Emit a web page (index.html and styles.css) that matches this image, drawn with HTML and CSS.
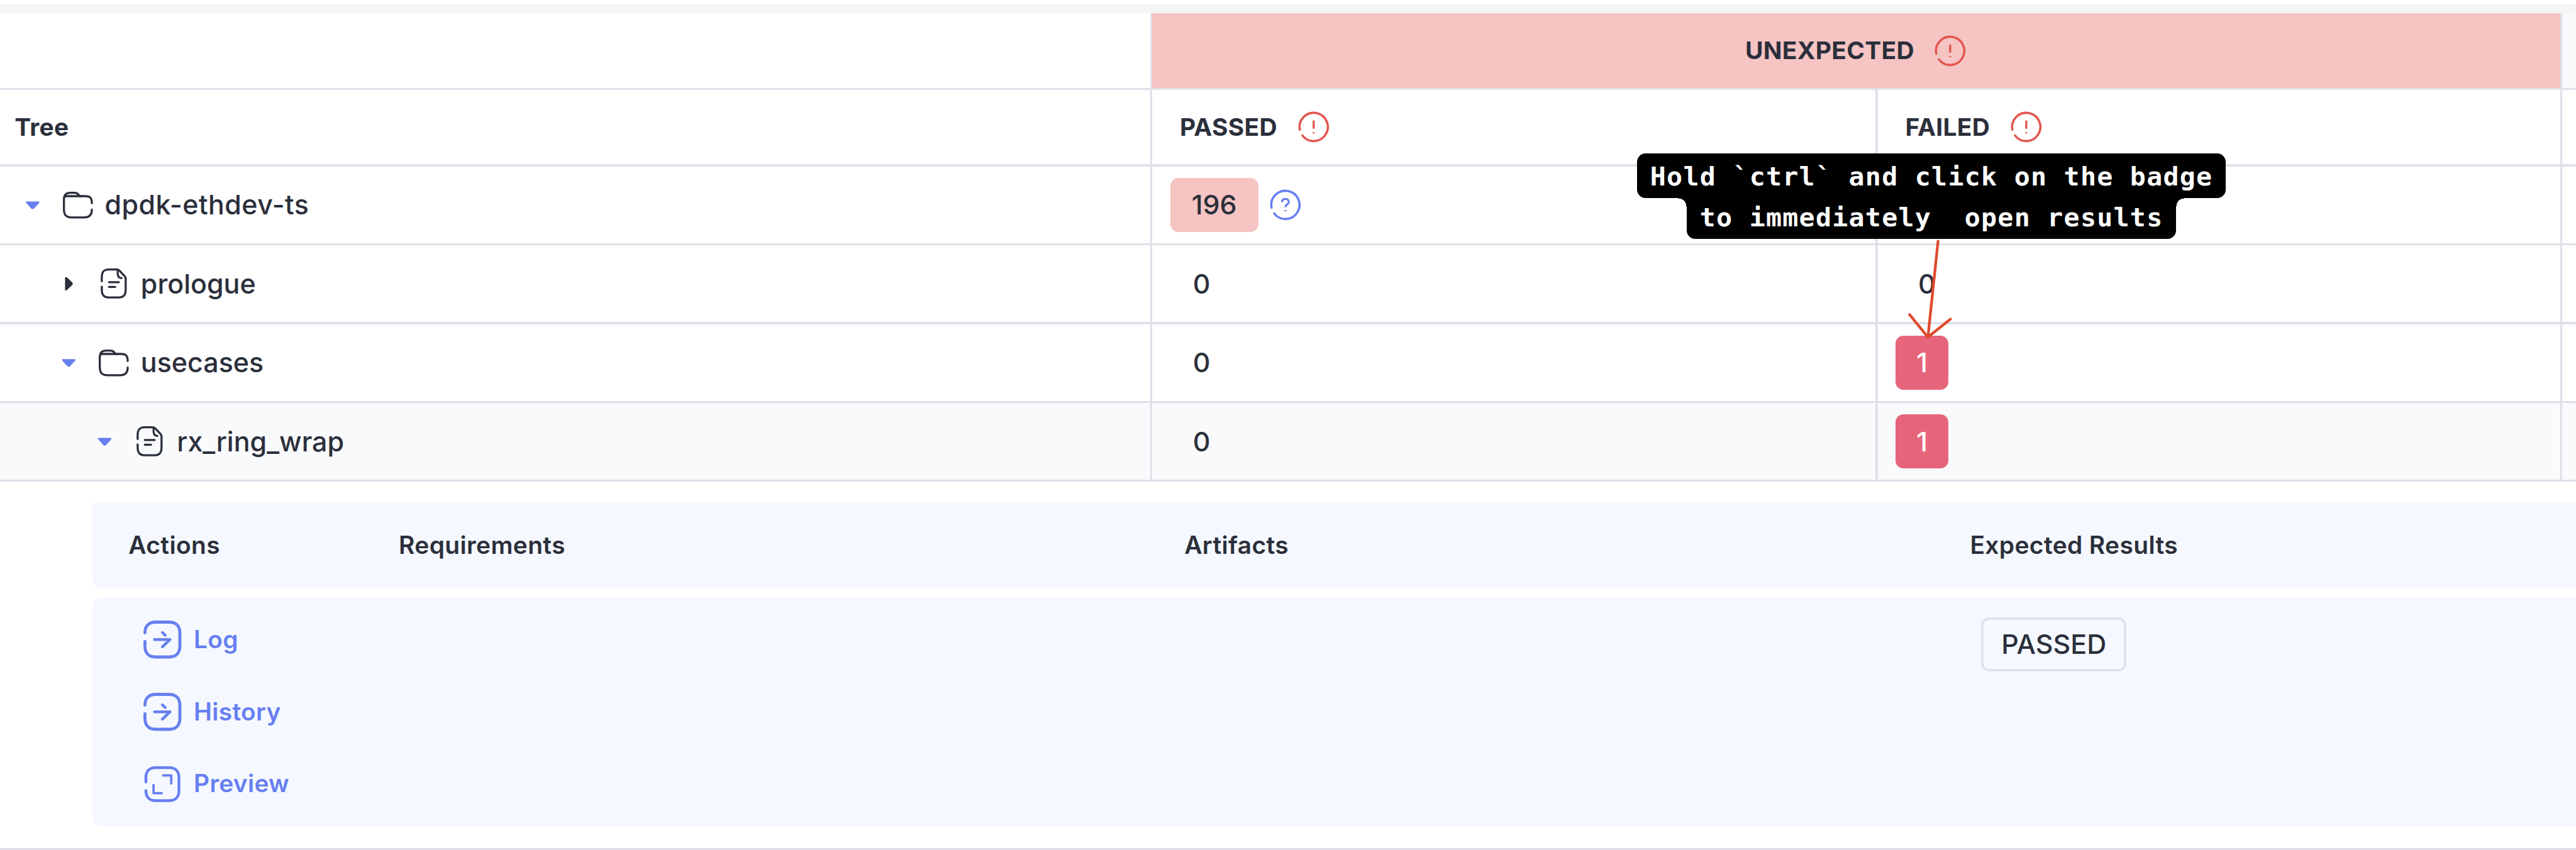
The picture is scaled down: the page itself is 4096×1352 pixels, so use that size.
FILE: index.html
```html
<!DOCTYPE html>
<html lang="en">
<head>
<meta charset="utf-8">
<title>Run results</title>
<link rel="stylesheet" href="styles.css">
</head>
<body>
<svg class="sprite" aria-hidden="true">
  <symbol id="alert" viewBox="-30 -30 60 60">
    <path d="M-24.6 5A25.1 25.1 0 1 1-20 15.2" stroke-width="4"/>
    <path d="M0-11.3V3.2M0 9.4V11.2" stroke-width="3.8" stroke-linecap="butt"/>
  </symbol>
  <symbol id="help" viewBox="-30 -30 60 60">
    <path d="M-24.6 5A25.1 25.1 0 1 1-20 15.2" stroke-width="4"/>
    <path d="M-6-4.5C-6-8.5-3.5-10.5 0-10.5S6-8.3 6-5C6-.5 0-1 0 4M0 9.2V11.2" stroke-width="3.6" stroke-linecap="butt"/>
  </symbol>
  <symbol id="folder" viewBox="-30 -30 60 60">
    <path d="M24.8-3C24.8-12 22-15.500 13-15.500H4C1-15.500 2-21.500-6-21.500H-13C-21-21.500-24.800-18-24.800-9V7C-24.800 18-21 22.300-11 22.300H11C20 22.300 24.800 18 24.800 8.500" stroke-width="3.700"/>
    <path d="M-23-14.500Q-22-15.500-19-15.500H5" stroke-width="3.700"/>
  </symbol>
  <symbol id="file" viewBox="-30 -30 60 60">
    <path d="M-21.200-4V-11C-21.200-21-17-24.800-9-24.800H5Q8-24.800 10-23L19-13.500Q21.200-11 21.200-8V11C21.200 21 17 24.800 9 24.800H-9C-17 24.800-21.200 21-21.200 11V5.500" stroke-width="3.700"/>
    <path d="M7-24V-18C7-12 10-9.500 14-9.500M-8.500-2.200H9M-8.500 6.200H2.500" stroke-width="3.500"/>
  </symbol>
  <symbol id="goto" viewBox="-36 -36 72 72">
    <path d="M-31-12C-31-24-24-31-12-31H12C24-31 31-24 31-12V12C31 24 24 31 12 31H-12C-24 31-31 24-31 12V3.500" stroke-width="5.400"/>
    <path d="M-14 0H13.500L0 13M0-12.500L5-7.500" stroke-width="5"/>
  </symbol>
  <symbol id="expand" viewBox="-36 -36 72 72">
    <path d="M-29.300-4V-12C-29.300-23-23-29.300-12-29.300H12C23-29.300 29.300-23 29.300-12V12C29.300 23 23 29.300 12 29.300H-12C-23 29.300-29.300 23-29.300 12V11.500" stroke-width="5"/>
    <path d="M-.3-15.500H15.700V.5M-15.700 0V16H.3" stroke-width="4.200" stroke-linecap="butt"/>
  </symbol>
</svg>

<main class="page">
  <div class="topbar"></div>
  <div class="grid">
    <div class="cell"></div>
    <div class="cell group"><span>UNEXPECTED</span><svg class="icon red"><use href="#alert"/></svg></div>
    <div class="cell tinted"></div>

    <div class="cell head tree-head">Tree</div>
    <div class="cell head"><span>PASSED</span><svg class="icon red"><use href="#alert"/></svg></div>
    <div class="cell head"><span>FAILED</span><svg class="icon red"><use href="#alert"/></svg></div>
    <div class="cell"></div>

    <div class="cell node root"><i class="caret open"></i><svg class="icon"><use href="#folder"/></svg><span>dpdk-ethdev-ts</span></div>
    <div class="cell value"><span class="badge soft">196</span><svg class="icon blue"><use href="#help"/></svg></div>
    <div class="cell value"></div>
    <div class="cell"></div>

    <div class="cell node level-1"><i class="caret"></i><svg class="icon"><use href="#file"/></svg><span>prologue</span></div>
    <div class="cell value"><span class="badge">0</span></div>
    <div class="cell value"><span class="badge">0</span></div>
    <div class="cell"></div>

    <div class="cell node level-1"><i class="caret open"></i><svg class="icon"><use href="#folder"/></svg><span>usecases</span></div>
    <div class="cell value"><span class="badge">0</span></div>
    <div class="cell value"><span class="badge strong">1</span></div>
    <div class="cell"></div>

    <div class="cell node level-2 tinted"><i class="caret open"></i><svg class="icon"><use href="#file"/></svg><span>rx_ring_wrap</span></div>
    <div class="cell value tinted"><span class="badge">0</span></div>
    <div class="cell value tinted"><span class="badge strong">1</span></div>
    <div class="cell tinted"></div>
  </div>

  <section class="details">
    <div class="panel panel-head">
      <span>Actions</span><span>Requirements</span><span>Artifacts</span><span>Expected Results</span>
    </div>
    <div class="panel panel-body">
      <nav class="actions">
        <a class="action"><svg><use href="#goto"/></svg><span>Log</span></a>
        <a class="action"><svg><use href="#goto"/></svg><span>History</span></a>
        <a class="action"><svg><use href="#expand"/></svg><span>Preview</span></a>
      </nav>
      <div></div>
      <div></div>
      <div class="expected"><span class="outline">PASSED</span></div>
    </div>
  </section>

  <div class="note">
    <span class="note-line first">Hold `ctrl` and click on the badge</span>
    <span class="note-line second">to immediately  open results</span>
  </div>
  <svg class="arrow" viewBox="3380 420 100 190"><path d="M3441 428.500L3423 599M3390.500 559L3423 599L3463 567"/></svg>
</main>
</body>
</html>
```

FILE: styles.css
```css
html {
  font-size: calc(100vw / 457.4);
}

body {
  margin: 0;
  overflow: hidden;
  background: #fff;
  color: #2b2f3b;
  font-family: Inter, sans-serif;
  font-size: 4.8rem;
  font-weight: 450;
  line-height: 1;
}

.sprite {
  position: absolute;
  width: 0;
  height: 0;
}

.page {
  position: relative;
  width: 457.4rem;
  height: 151rem;
  overflow: hidden;
}

.topbar {
  height: 1.6rem;
  margin-top: 0.8rem;
  background: #f5f5f5;
}

.page::before {
  content: "";
  display: table;
}

/* Grid lines are the container's background, seen through the gaps. */
.grid {
  display: grid;
  grid-template-columns: 204.2rem 128.4rem 121.2rem 2.4rem;
  grid-template-rows: 13.2rem 13.2rem repeat(4, 13.6rem);
  gap: 0.4rem;
  padding-bottom: 0.4rem;
  background: #dfe0e9;
}

.cell {
  display: flex;
  align-items: center;
  background: #fff;
}

.tinted {
  background: #f9fafc;
}

.group {
  grid-column: span 2;
  justify-content: center;
  gap: 3.4rem;
  background: #f5c4c3;
  font-size: 4.35rem;
  font-weight: 650;
  letter-spacing: 0.03rem;
}

.head {
  gap: 3.5rem;
  padding-left: 4.9rem;
  font-size: 4.35rem;
  font-weight: 650;
  letter-spacing: 0.03rem;
}

.tree-head {
  padding-left: 2.6rem;
}

.icon {
  flex: none;
  width: 6rem;
  height: 6rem;
}

svg {
  fill: none;
  stroke: currentColor;
  stroke-linecap: round;
  stroke-linejoin: round;
}

.red {
  color: #e2574f;
}

.blue {
  color: #677ff0;
}

.node {
  padding-left: 4.6rem;
}

.root {
  letter-spacing: 0.05rem;
}

.level-1 {
  padding-left: 11rem;
}

.level-2 {
  padding-left: 17.4rem;
}

.node span {
  margin-left: 1.8rem;
}

.node .icon {
  margin-left: 3.8rem;
}

.caret {
  width: 2.4rem;
  height: 2.4rem;
  background: #2b2f3b;
  clip-path: polygon(23% 0, 36% 2%, 79% 43%, 79% 57%, 36% 98%, 23% 100%);
}

.caret.open {
  background: #677ff0;
  clip-path: polygon(0 25%, 100% 25%, 98% 35%, 57% 81%, 43% 81%, 2% 35%);
}

.value {
  gap: 1.8rem;
  padding-left: 3.2rem;
}

.badge {
  display: flex;
  align-items: center;
  justify-content: center;
  box-sizing: border-box;
  height: 9.6rem;
  padding: 0 4rem;
  border-radius: 1.4rem;
}

.soft {
  width: 15.6rem;
  padding: 0;
  background: #f5c4c3;
}

.strong {
  width: 9.4rem;
  padding: 0;
  background: #e6657b;
  color: #fff;
}

.details {
  display: flex;
  flex-direction: column;
  gap: 1.6rem;
  height: 57.7rem;
  padding: 3.65rem 0 3.65rem 16.4rem;
  box-sizing: content-box;
  border-bottom: 0.45rem solid #dfe0e9;
}

.panel {
  display: grid;
  grid-template-columns: 48rem 139.5rem 139.5rem 1fr;
  padding-left: 6.4rem;
  background: #f5f9ff;
}

.panel-head {
  align-items: center;
  height: 15.2rem;
  border-radius: 0 0 0 1.6rem;
  font-size: 4.35rem;
  font-weight: 600;
  letter-spacing: 0.04rem;
}

.panel-body {
  height: 40.8rem;
  border-radius: 1.6rem 0 0 1.6rem;
}

.actions {
  display: flex;
  flex-direction: column;
  gap: 5.6rem;
  padding: 4rem 0 0 2.4rem;
  color: #677ff0;
  font-size: 4.35rem;
  font-weight: 600;
  letter-spacing: 0.03rem;
}

.action {
  display: flex;
  align-items: center;
  gap: 2rem;
}

.action svg {
  width: 7.2rem;
  height: 7.2rem;
}

.expected {
  padding: 3.6rem 0 0 2rem;
}

.outline {
  display: flex;
  align-items: center;
  justify-content: center;
  box-sizing: border-box;
  width: 25.8rem;
  height: 9.6rem;
  border: 0.45rem solid #dfe3ea;
  border-radius: 1.4rem;
}

.note {
  position: absolute;
  top: 27.3rem;
  left: 290.7rem;
  display: flex;
  flex-direction: column;
  align-items: center;
  width: 104.5rem;
  color: #fff;
  font-family: "DejaVu Sans Mono", monospace;
  font-size: 4.65rem;
  font-weight: 700;
  letter-spacing: 0.14rem;
  white-space: pre;
}

.note-line {
  position: relative;
  display: flex;
  align-items: center;
  justify-content: center;
  box-sizing: border-box;
  height: 7.9rem;
  background: #000;
  border-radius: 1.5rem;
}

.first {
  width: 100%;
  padding-top: 0.3rem;
}

.second {
  width: 86.9rem;
  height: 7.25rem;
  padding-bottom: 0.4rem;
  border-radius: 0 0 1.5rem 1.5rem;
}

/* Concave corners where the narrow line meets the wide one. */
.second::before,
.second::after {
  content: "";
  position: absolute;
  top: 0;
  width: 1.4rem;
  height: 1.4rem;
}

.second::before {
  right: 100%;
  background: radial-gradient(circle at 0 100%, transparent 1.35rem, #000 1.4rem);
}

.second::after {
  left: 100%;
  background: radial-gradient(circle at 100% 100%, transparent 1.35rem, #000 1.4rem);
}

.arrow {
  position: absolute;
  top: 42rem;
  left: 338rem;
  width: 10rem;
  height: 19rem;
  color: #e0492b;
  stroke-width: 4.8;
}
```
